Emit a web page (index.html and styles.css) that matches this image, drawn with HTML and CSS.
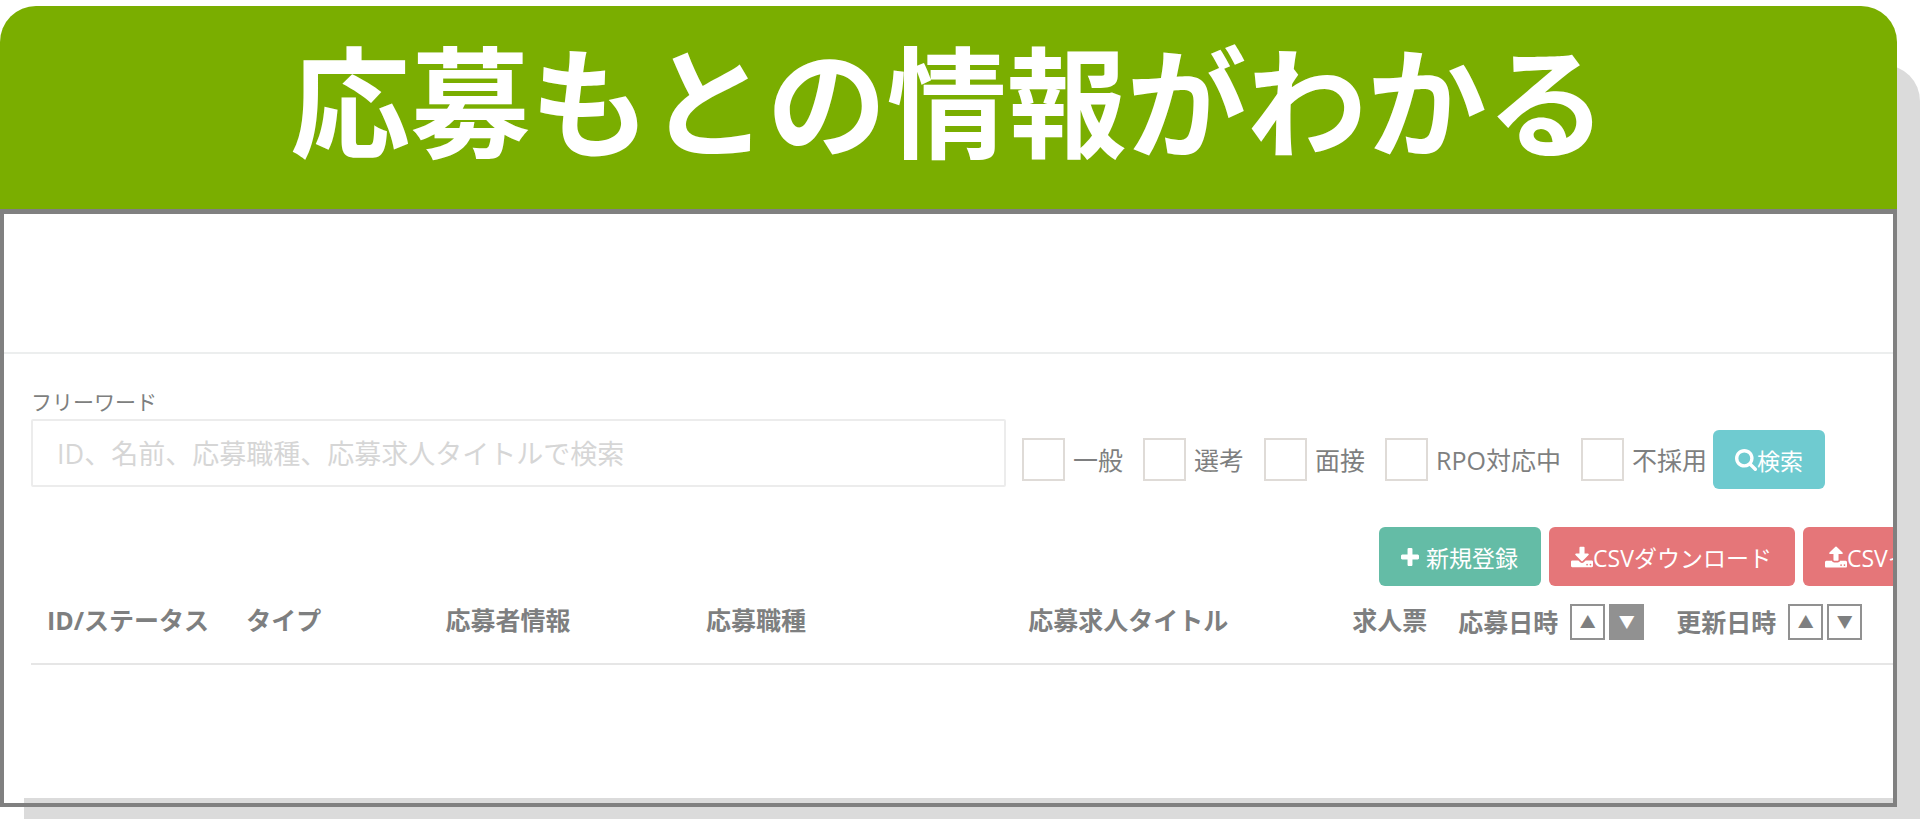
FILE: index.html
```html
<!DOCTYPE html>
<html lang="ja">
<head>
    <meta charset="UTF-8">
    <meta name="viewport" content="width=device-width, initial-scale=1.0">
    <title>応募もとの情報がわかる</title>
    <link rel="stylesheet" href="styles.css">
</head>
<body>
    <div class="card">
        <div class="card-shadow"></div>
        <h1 class="card-title">応募もとの情報がわかる</h1>
        <div class="panel">
            <div class="panel-body">
                <div class="panel-top"></div>
                <div class="content">
                    <form class="search">
                        <div class="keyword">
                            <label for="keyword">フリーワード</label>
                            <input type="text" id="keyword" placeholder="ID、名前、応募職種、応募求人タイトルで検索">
                        </div>
                        <div class="filters">
                            <label class="check"><input type="checkbox">一般</label>
                            <label class="check"><input type="checkbox">選考</label>
                            <label class="check"><input type="checkbox">面接</label>
                            <label class="check"><input type="checkbox">RPO対応中</label>
                            <label class="check"><input type="checkbox">不採用</label>
                        </div>
                        <button type="button" class="btn btn-search">
                            <svg class="icon" viewBox="0 0 1664 1664"><path d="M1152 704q0-185-131.500-316.500t-316.500-131.500-316.500 131.500-131.500 316.500 131.500 316.500 316.500 131.500 316.500-131.500 131.500-316.500zm512 832q0 52-38 90t-90 38q-54 0-90-38l-343-342q-179 124-399 124-143 0-273.500-55.500t-225-150-150-225-55.500-273.500 55.500-273.500 150-225 225-150 273.500-55.500 273.500 55.500 225 150 150 225 55.500 273.500q0 220-124 399l343 343q37 37 37 90z"/></svg>検索
                        </button>
                    </form>

                    <div class="actions">
                        <button type="button" class="btn btn-new">
                            <svg class="icon icon-plus" viewBox="0 0 1408 1408"><path d="M1408 608v192q0 40-28 68t-68 28h-416v416q0 40-28 68t-68 28h-192q-40 0-68-28t-28-68v-416h-416q-40 0-68-28t-28-68v-192q0-40 28-68t68-28h416v-416q0-40 28-68t68-28h192q40 0 68 28t28 68v416h416q40 0 68 28t28 68z"/></svg>新規登録
                        </button>
                        <button type="button" class="btn btn-csv">
                            <svg class="icon" viewBox="0 0 1664 1536"><path d="M1280 1344q0-26-19-45t-45-19-45 19-19 45 19 45 45 19 45-19 19-45zm256 0q0-26-19-45t-45-19-45 19-19 45 19 45 45 19 45-19 19-45zm128-224v320q0 40-28 68t-68 28h-1472q-40 0-68-28t-28-68v-320q0-40 28-68t68-28h465l135 136q58 56 136 56t136-56l136-136h464q40 0 68 28t28 68zm-325-569q17 41-14 70l-448 448q-18 19-45 19t-45-19l-448-448q-31-29-14-70 17-39 59-39h256v-448q0-26 19-45t45-19h256q26 0 45 19t19 45v448h256q42 0 59 39z"/></svg>CSVダウンロード
                        </button>
                        <button type="button" class="btn btn-csv">
                            <svg class="icon" viewBox="0 0 1664 1600"><path d="M1280 1408q0-26-19-45t-45-19-45 19-19 45 19 45 45 19 45-19 19-45zm256 0q0-26-19-45t-45-19-45 19-19 45 19 45 45 19 45-19 19-45zm128-224v320q0 40-28 68t-68 28h-1472q-40 0-68-28t-28-68v-320q0-40 28-68t68-28h427q21 56 70.500 92t110.500 36h256q61 0 110.500-36t70.500-92h427q40 0 68 28t28 68zm-325-648q-17 40-59 40h-256v448q0 26-19 45t-45 19h-256q-26 0-45-19t-19-45v-448h-256q-42 0-59-40-17-39 14-69l448-448q18-19 45-19t45 19l448 448q31 30 14 69z"/></svg>CSVインポート
                        </button>
                    </div>

                    <table class="list">
                        <thead>
                            <tr>
                                <th class="col-id">ID/ステータス</th>
                                <th class="col-type">タイプ</th>
                                <th class="col-person">応募者情報</th>
                                <th class="col-job">応募職種</th>
                                <th class="col-title">応募求人タイトル</th>
                                <th class="col-sheet">求人票</th>
                                <th class="col-date">
                                    <div class="sort">応募日時
                                        <span class="sort-buttons"><button type="button">▲</button><button type="button" class="active">▼</button></span>
                                    </div>
                                </th>
                                <th class="col-updated">
                                    <div class="sort">更新日時
                                        <span class="sort-buttons"><button type="button">▲</button><button type="button">▼</button></span>
                                    </div>
                                </th>
                            </tr>
                        </thead>
                    </table>
                </div>
            </div>
        </div>
    </div>
</body>
</html>
```

FILE: styles.css
```css
* {
    box-sizing: border-box;
}
body {
    margin: 0;
    padding: 6px 23px 18px 0;
    background: #fff;
    color: #7e7f80;
    font-family: "Open Sans", "Noto Sans CJK JP", sans-serif;
    font-size: 25px;
    line-height: 36px;
    overflow-x: hidden;
}
button, input {
    font-family: inherit;
}

/* card */
.card {
    position: relative;
}
.card-shadow {
    position: absolute;
    z-index: -1;
    top: 59px;
    left: 24px;
    right: -23px;
    bottom: -12px;
    background: #dbdbdb;
    border-top-right-radius: 36px;
}
.card-title {
    margin: 0;
    padding: 11px 0 32px;
    background: #7aae00;
    border-radius: 36px 36px 0 0;
    color: #fff;
    font-family: "Noto Sans CJK JP", sans-serif;
    font-size: 120px;
    font-weight: 700;
    line-height: 160px;
    text-align: center;
    white-space: nowrap;
}
.panel {
    border: 4px solid #808080;
    border-top-width: 5px;
    padding-bottom: 5px;
}
.panel-body {
    background: #fff;
    overflow: hidden;
}
.panel-top {
    height: 140px;
    border-bottom: 2px solid #eceeee;
}
.content {
    padding: 32px 0 133px 27px;
}

/* search form */
.search {
    display: flex;
    align-items: flex-end;
}
.keyword {
    flex: 0 1 975px;
}
.keyword label {
    display: block;
    font-size: 21px;
    line-height: 32px;
}
.keyword input {
    display: block;
    width: 100%;
    height: 68px;
    margin-top: 1px;
    padding: 0 24px;
    border: 2px solid #ececec;
    border-radius: 2px;
    font-size: 27px;
}
.keyword input::placeholder {
    color: #d6d6d6;
}
.filters {
    display: flex;
    gap: 20px;
    margin: 0 6px 6px 16px;
}
.check {
    display: flex;
    align-items: center;
    gap: 8px;
    white-space: nowrap;
}
.check input {
    appearance: none;
    width: 43px;
    height: 43px;
    margin: 0;
    border: 2px solid #dfdbd7;
    background: #fff;
}

/* buttons */
.btn {
    display: flex;
    align-items: center;
    flex-shrink: 0;
    height: 59px;
    padding: 0 22px;
    border: 0;
    border-radius: 6px;
    color: #fff;
    font-size: 23px;
    white-space: nowrap;
}
.icon {
    width: 22px;
    height: 22px;
    fill: currentColor;
}
.icon-plus {
    width: 18px;
    margin-right: 7px;
}
.btn-search {
    margin-bottom: -2px;
    background: #6fcbd0;
}
.btn-new {
    background: #64bca6;
}
.btn-csv {
    background: #e57679;
}
.actions {
    display: flex;
    gap: 8px;
    margin: 40px 0 0 72.4%;
}
.actions .btn {
    padding: 0 23px 0 22px;
}

/* list */
.list {
    width: 100%;
    table-layout: fixed;
    border-collapse: collapse;
}
.list th {
    height: 78px;
    padding: 0 0 9px 16px;
    border-bottom: 2px solid #e6e6e6;
    text-align: left;
    white-space: nowrap;
}
.list .col-date, .list .col-updated {
    padding-bottom: 5px;
}
.col-id, .col-type {
    width: 10.7%;
}
.col-person {
    width: 14%;
}
.col-job {
    width: 17.3%;
}
.col-title {
    width: 17.4%;
}
.col-sheet {
    width: 5.7%;
}
.col-date {
    width: 11.7%;
}
.sort {
    display: flex;
    align-items: center;
    gap: 12px;
}
.sort-buttons {
    display: flex;
    gap: 4px;
}
.sort-buttons button {
    width: 35px;
    height: 36px;
    padding: 0;
    border: 2px solid #919191;
    background: #fff;
    color: #7e7f80;
    font-size: 16px;
    line-height: 30px;
}
.sort-buttons .active {
    background: #919191;
    color: #fff;
}
```
